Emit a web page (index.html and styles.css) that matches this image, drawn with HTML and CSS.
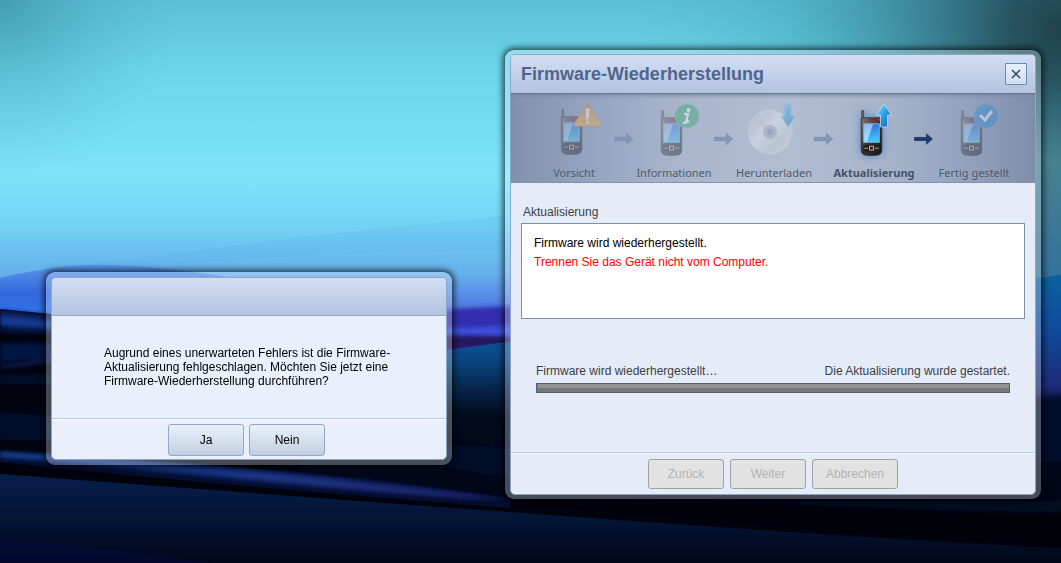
FILE: index.html
```
<!DOCTYPE html>
<html lang="de">
<head>
  <meta charset="UTF-8">
  <meta name="viewport" content="width=device-width, initial-scale=1.0">
  <title>Firmware-Wiederherstellung</title>
  <link rel="stylesheet" href="styles.css">
</head>
<body>
  <svg class="wallpaper" viewBox="0 0 1061 563" preserveAspectRatio="none" aria-hidden="true">
    <defs>
      <linearGradient id="sky" x1="0" y1="0" x2="0" y2="1">
        <stop offset="0" stop-color="#5cbfd6"/>
        <stop offset=".2" stop-color="#6bd5ea"/>
        <stop offset=".5" stop-color="#7de4fb"/>
        <stop offset=".64" stop-color="#74d4f4"/>
        <stop offset=".78" stop-color="#66b0ec"/>
        <stop offset=".88" stop-color="#507ae2"/>
        <stop offset=".93" stop-color="#3c3fc0"/>
        <stop offset="1" stop-color="#332cb2"/>
      </linearGradient>
      <radialGradient id="shadeRight" gradientUnits="userSpaceOnUse" cx="1061" cy="30" r="430">
        <stop offset="0" stop-color="#1f424c"/>
        <stop offset=".12" stop-color="#244e5a" stop-opacity=".95"/>
        <stop offset=".35" stop-color="#2b6a7c" stop-opacity=".65"/>
        <stop offset=".65" stop-color="#3390a5" stop-opacity=".25"/>
        <stop offset="1" stop-color="#4fb5cc" stop-opacity="0"/>
      </radialGradient>
      <radialGradient id="shadeLeft" gradientUnits="userSpaceOnUse" cx="0" cy="0" r="180">
        <stop offset="0" stop-color="#2f7f93" stop-opacity=".55"/>
        <stop offset="1" stop-color="#4fb5cc" stop-opacity="0"/>
      </radialGradient>
      <linearGradient id="edge" x1="0" y1="0" x2="0" y2="1">
        <stop offset="0" stop-color="#2a5560" stop-opacity="0"/>
        <stop offset=".4" stop-color="#47818f"/>
        <stop offset="1" stop-color="#33719b"/>
      </linearGradient>
      <linearGradient id="wave" x1="0" y1="0" x2="0" y2="1">
        <stop offset="0" stop-color="#5b98e9"/>
        <stop offset=".5" stop-color="#3467dc"/>
        <stop offset="1" stop-color="#2c75ec"/>
      </linearGradient>
      <linearGradient id="deep" x1="0" y1="0" x2="0" y2="1">
        <stop offset="0" stop-color="#0f62ac"/>
        <stop offset=".2" stop-color="#0a4684"/>
        <stop offset=".32" stop-color="#062448"/>
        <stop offset=".42" stop-color="#020a1c"/>
        <stop offset="1" stop-color="#010314"/>
      </linearGradient>
      <linearGradient id="right" x1="0" y1="0" x2="0" y2="1">
        <stop offset="0" stop-color="#0b629f"/>
        <stop offset=".45" stop-color="#10499a"/>
        <stop offset=".9" stop-color="#1c2a76"/>
        <stop offset="1" stop-color="#0b1340"/>
      </linearGradient>
      <linearGradient id="floor" x1="0" y1="0" x2="0" y2="1">
        <stop offset="0" stop-color="#071e4c"/>
        <stop offset=".5" stop-color="#031434"/>
        <stop offset="1" stop-color="#020719"/>
      </linearGradient>
      <linearGradient id="beam" x1="0" y1="0" x2="1" y2="0">
        <stop offset="0" stop-color="#123c88"/>
        <stop offset=".55" stop-color="#1b3484"/>
        <stop offset="1" stop-color="#1a2468"/>
      </linearGradient>
      <filter id="soft" x="-5%" y="-50%" width="110%" height="200%"><feGaussianBlur stdDeviation="2"/></filter>
    </defs>
    <rect width="1061" height="350" fill="url(#sky)"/>
    <rect width="1061" height="350" fill="url(#shadeRight)"/>
    <rect width="400" height="200" fill="url(#shadeLeft)"/>
    <rect x="1030" y="80" width="31" height="200" fill="url(#edge)"/>
    <path d="M0 277Q250 240 505 216V250Q300 252 100 270L0 284Z" fill="#5aa9ee" opacity=".15"/>
    <path d="M0 278Q30 270 80 265Q160 262 300 290V320H0Z" fill="url(#wave)"/>
    <path d="M430 312Q480 306 530 306V345H430Z" fill="#302fae" filter="url(#soft)"/>
    <path d="M430 329L530 325V338H430Z" fill="#3d4fdc" filter="url(#soft)"/>
    <path d="M430 335L530 337V344L430 352Z" fill="#25145e" filter="url(#soft)"/>
    <path d="M0 309L60 315L440 351L520 340H1061V563H0Z" fill="url(#deep)"/>
    <path d="M1030 279L1061 275V400H1030Z" fill="url(#right)"/>
    <path d="M0 309L60 315L300 340V563H0Z" fill="#01040f"/>
    <g filter="url(#soft)">
      <path d="M0 310L60 316V320L0 316Z" fill="#0a1f60"/>
      <path d="M0 316L60 321V329L0 325Z" fill="#143a94"/>
      <path d="M0 325L60 329V334L0 332Z" fill="#051642"/>
      <path d="M0 343H60V358L0 362Z" fill="#041642"/>
      <path d="M0 367L60 360" stroke="#161c60" stroke-width="3"/>
      <path d="M0 374H60V384H0Z" fill="#020c2a"/>
      <path d="M0 412Q40 414 60 418V440H0Z" fill="#020b2c"/>
      <path d="M440 446Q480 444 520 450V480L440 466Z" fill="#020828"/>
      <path d="M1030 400L1070 396V462H1030Z" fill="#030a2a"/>
    </g>
    <path d="M0 452Q250 478 500 500T1061 545V563H0Z" fill="#00020c"/>
    <path d="M0 452Q100 462 220 466Q360 474 510 498V508Q200 484 0 462Z" fill="#040d30"/>
    <path d="M0 474Q300 497 620 520T1061 548V563H0Z" fill="url(#floor)"/>
    <path d="M0 452C150 460 300 474 510 500C380 496 200 473 0 457Z" fill="url(#beam)" filter="url(#soft)"/>
    <path d="M0 454Q280 471 480 498" fill="none" stroke="url(#beam)" stroke-width="3" opacity=".8" filter="url(#soft)"/>
    <path d="M505 500Q780 504 1061 511V545Q780 532 505 500Z" fill="#010109"/>
    <path d="M700 500Q880 502 1061 500V513Q880 510 700 500Z" fill="#040720" filter="url(#soft)"/>
    <path d="M0 538Q100 546 210 563H0Z" fill="#030a34" opacity=".7"/>
  </svg>

  <svg class="sprite" aria-hidden="true">
    <defs>
      <linearGradient id="metal" x1="0" y1="0" x2="1" y2="1">
        <stop offset="0" stop-color="#7d7674"/>
        <stop offset=".5" stop-color="#3b3635"/>
        <stop offset="1" stop-color="#151212"/>
      </linearGradient>
      <linearGradient id="screen" x1="0" y1="0" x2="0" y2="1">
        <stop offset="0" stop-color="#3274df"/>
        <stop offset="1" stop-color="#45cdfb"/>
      </linearGradient>
      <linearGradient id="blueArrow" x1="0" y1="0" x2="1" y2="1">
        <stop offset="0" stop-color="#8edcff"/>
        <stop offset=".5" stop-color="#289be3"/>
        <stop offset="1" stop-color="#0b62b4"/>
      </linearGradient>
      <linearGradient id="orange" x1="0" y1="0" x2="0" y2="1">
        <stop offset="0" stop-color="#d98638"/>
        <stop offset="1" stop-color="#ffb63e"/>
      </linearGradient>
      <linearGradient id="disc" x1="0" y1="0" x2="1" y2="1">
        <stop offset="0" stop-color="#e4e6ec"/>
        <stop offset=".25" stop-color="#cfd0de"/>
        <stop offset=".45" stop-color="#f2f4f7"/>
        <stop offset=".7" stop-color="#cbd2dc"/>
        <stop offset="1" stop-color="#f3f4f8"/>
      </linearGradient>
    </defs>
    <symbol id="phone" viewBox="0 0 24 50">
      <rect x="1" y="1" width="3" height="14" rx="1" fill="#5c5655"/>
      <path d="M1 10Q1 9 3 9H20Q22 9 22 11V42Q22 46 18 47Q11 48 5 47Q1 46 1 42Z" fill="url(#metal)" stroke="#2b2625" stroke-width=".8"/>
      <path d="M9 10h8v2H9z" fill="#8c2435"/>
      <circle cx="19" cy="11" r="1" fill="#cf3654"/>
      <path d="M3.500 15H19.500V34H3.500Z" fill="url(#screen)" stroke="#a9c6dc" stroke-width=".7"/>
      <path d="M4 15.500H13L7 33.500H4Z" fill="#fff" opacity=".5"/>
      <path d="M3 37Q11 35 20 37V43Q11 46 3 43Z" fill="#242020"/>
      <rect x="9.500" y="38" width="4" height="4" fill="#2a2223" stroke="#dca0ab"/>
      <path d="M4 40h4m7 0h4" stroke="#a9a2a1"/>
    </symbol>
    <symbol id="next" viewBox="0 0 20 14">
      <path d="M0 5H12V1L19 7L12 13V9H0Z" fill="currentColor" stroke="#7088b8" stroke-opacity=".3"/>
    </symbol>
  </svg>

  <section class="window message" role="dialog" aria-label="Meldung">
    <div class="panel">
      <header class="titlebar"></header>
      <p class="message-text">Augrund eines unerwarteten Fehlers ist die Firmware-Aktualisierung fehlgeschlagen. Möchten Sie jetzt eine Firmware-Wiederherstellung durchführen?</p>
      <footer class="actions">
        <button type="button">Ja</button>
        <button type="button">Nein</button>
      </footer>
    </div>
  </section>

  <section class="window wizard" role="dialog" aria-labelledby="wizard-title">
    <div class="panel">
      <header class="titlebar">
        <h1 id="wizard-title">Firmware-Wiederherstellung</h1>
        <button class="close" type="button" aria-label="Schließen">
          <svg viewBox="0 0 10 10" width="10" height="10"><path d="M1 1L9 9M9 1L1 9" stroke="#2e466f" stroke-width="1.500"/></svg>
        </button>
      </header>

      <div class="steps">
        <div class="step">
          <svg class="step-icon" viewBox="0 0 60 60">
            <use href="#phone" x="16" y="7" width="24" height="49"/>
            <path d="M43 3Q44 2 45 3L57 23Q57 25 56 25H31Q30 25 30 23Z" fill="url(#orange)" stroke="#cb9250"/>
            <path d="M42 8h3l-1 10h-1z" fill="#fff" stroke="#fff"/>
            <circle cx="43.500" cy="21" r="1.500" fill="#fff"/>
          </svg>
          <span>Vorsicht</span>
        </div>
        <svg class="next"><use href="#next"/></svg>
        <div class="step">
          <svg class="step-icon" viewBox="0 0 60 60">
            <use href="#phone" x="16" y="8" width="24" height="49"/>
            <circle cx="43" cy="15" r="12" fill="#31a569" stroke="#5eaf87"/>
            <circle cx="44.500" cy="9" r="2" fill="#fff"/>
            <path d="M40 13H44L42 21M39 22Q42 22 45 20" fill="none" stroke="#fff" stroke-width="2.500"/>
          </svg>
          <span>Informationen</span>
        </div>
        <svg class="next"><use href="#next"/></svg>
        <div class="step">
          <svg class="step-icon" viewBox="0 0 60 60">
            <circle cx="26" cy="31" r="22" fill="url(#disc)" stroke="#d2dae6"/>
            <path d="M26 31L7 20A22 22 0 0 1 14 13Z" fill="#d9bfd6" opacity=".5"/>
            <path d="M26 31L45 42A22 22 0 0 1 38 49Z" fill="#c3dfd3" opacity=".5"/>
            <circle cx="26" cy="31" r="7" fill="#a2acba"/>
            <circle cx="26" cy="31" r="3" fill="#77879c"/>
            <path d="M40 3H47V15H51L44 26L37 15H40Z" fill="url(#blueArrow)" stroke="#7cb7dc"/>
          </svg>
          <span>Herunterladen</span>
        </div>
        <svg class="next"><use href="#next"/></svg>
        <div class="step current">
          <svg class="step-icon" viewBox="0 0 60 60">
            <use class="glow" href="#phone" x="16" y="8" width="24" height="49"/>
            <path d="M40 3L47.500 14H43.500V26H36.500V14H32.500Z" fill="url(#blueArrow)" stroke="#b9dcf2" stroke-width=".8"/>
          </svg>
          <span>Aktualisierung</span>
        </div>
        <svg class="next active"><use href="#next"/></svg>
        <div class="step">
          <svg class="step-icon" viewBox="0 0 60 60">
            <use href="#phone" x="16" y="8" width="24" height="49"/>
            <circle cx="42" cy="15" r="12" fill="#2b8bd0" stroke="#4b9bd2"/>
            <path d="M36 14L41 19L48 10" fill="none" stroke="#fff" stroke-width="3"/>
          </svg>
          <span>Fertig gestellt</span>
        </div>
      </div>

      <main class="content">
        <h2>Aktualisierung</h2>
        <div class="log">
          <p>Firmware wird wiederhergestellt.</p>
          <p class="warning">Trennen Sie das Gerät nicht vom Computer.</p>
        </div>
        <div class="progress">
          <div class="progress-text">
            <label for="update">Firmware wird wiederhergestellt…</label>
            <span>Die Aktualisierung wurde gestartet.</span>
          </div>
          <progress id="update" value="1" max="472"></progress>
        </div>
      </main>

      <footer class="actions">
        <button type="button" disabled>Zurück</button>
        <button type="button" disabled>Weiter</button>
        <button type="button" disabled>Abbrechen</button>
      </footer>
    </div>
  </section>
</body>
</html>
```
FILE: styles.css
```
* { box-sizing: border-box; }
body { margin: 0; min-height: 100vh; overflow: hidden; background: #020716; color: #000; font: 12px/14px "Liberation Sans", Arial, sans-serif; }
h1, h2, p { margin: 0; }

.wallpaper { position: fixed; inset: 0; width: 100%; height: 100%; }
.sprite { position: absolute; width: 0; height: 0; }

/* windows */
.window { position: absolute; padding: 5px; border-radius: 9px; background: rgba(255, 255, 255, .28); box-shadow: 0 0 6px 2px rgba(0, 0, 0, .7); }
.message { left: 46px; top: 272px; width: 406px; }
.wizard { right: 20px; top: 50px; width: 536px; padding: 4px 5px; }
.panel { border: 1px solid #8ca5cb; border-radius: 5px; background: #e9f0fb; overflow: hidden; }
.wizard .panel { background: #e5ecf8; }

.titlebar { display: flex; align-items: center; justify-content: space-between; min-height: 38px; padding: 0 8px 0 10px; border-bottom: 1px solid #8fa9ce; background: linear-gradient(#d3def4, #b3c4df); }
.titlebar h1 { color: #50658d; font-size: 18px; line-height: 22px; }
.wizard .titlebar { min-height: 39px; border-color: #68788f; }

button { min-width: 76px; height: 32px; padding: 0 13px; border: 1px solid #8fa9ca; border-radius: 3px; background: linear-gradient(#e9f0fa, #c2cfe2); color: #000; font: inherit; }
button:disabled { height: 30px; border-color: #a2a2a4; background: #e2e2e2; color: #b3b3b3; }
.close { display: flex; align-items: center; justify-content: center; min-width: 22px; height: 22px; padding: 0; border-color: #6e89ae; border-radius: 1px; background: linear-gradient(#e9effa, #d3ddef); }

.message-text { padding: 30px 52px; }
.actions { display: flex; justify-content: center; gap: 6px; padding: 5px 0; border-top: 1px solid #b3c7e0; box-shadow: inset 0 1px #fff; }
.message .actions { gap: 5px; padding: 5px 5px 3px 0; }
.wizard .actions { padding: 6px 0 5px; }

/* wizard steps */
.steps { display: flex; justify-content: center; height: 89px; padding: 7px 0 0 2px; border-bottom: 1px solid #8592a8; background: linear-gradient(90deg, #8091ae 0%, #94a4c1 15%, #a8b5cc 32%, #b1bdd1 52%, #a8b5cc 70%, #94a4c0 86%, #7e8eab 100%); box-shadow: inset 0 3px 4px -2px #71819b; }
.step { display: flex; flex-direction: column; align-items: center; width: 100px; color: #515c6b; font: 11px/18px "Noto Sans", sans-serif; font-size: 11px; white-space: nowrap; }
.step span { margin-top: 3px; }
.step-icon { width: 60px; height: 60px; opacity: .4; }
.step.current { color: #465468; font-weight: bold; }
.current .step-icon { opacity: 1; overflow: visible; }
.glow { filter: drop-shadow(0 0 4px #4f82c6); }
.next { width: 20px; height: 14px; margin: 31px -10px 0; color: #8496b4; }
.next.active { color: #1d3a67; }

.content { padding: 21px 10px 59px; color: #3c4043; }
.content h2 { padding: 0 2px; font-size: 12px; font-weight: normal; line-height: 16px; }
.log { height: 96px; margin-top: 3px; padding: 10px 12px; border: 1px solid #7c8faa; background: #fff; color: #000; line-height: 19px; }
.log .warning { color: #f00; }
.progress { margin: 44px 15px 0; }
.progress-text { display: flex; justify-content: space-between; line-height: 16px; }
progress { display: block; width: 100%; height: 10px; margin-top: 4px; border: 1px solid #536176; appearance: none; }
progress::-webkit-progress-bar { background: linear-gradient(#929492 50%, #777 50%); }
progress::-webkit-progress-value { background: #4d7fd6; }
```
